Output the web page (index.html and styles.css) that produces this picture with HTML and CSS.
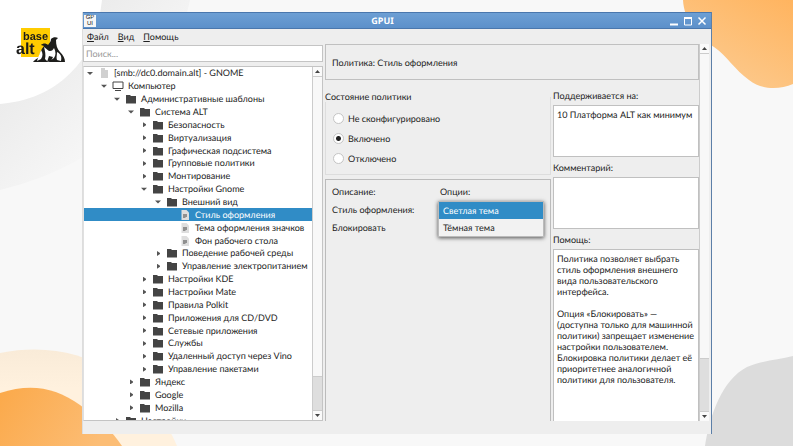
FILE: index.html
```html
<!DOCTYPE html>
<html lang="ru">
<head>
<meta charset="utf-8">
<title>GPUI</title>
<link rel="stylesheet" href="styles.css">
</head>
<body>
<svg class="backdrop" viewBox="0 0 793 446" preserveAspectRatio="none" aria-hidden="true">
  <defs>
    <linearGradient id="g-shade" x1="0" y1="0" x2="1" y2="1"><stop offset="0" stop-color="#e4e4e4"/><stop offset="0.7" stop-color="#f8f8f8"/></linearGradient>
    <linearGradient id="g-top" x1="1" y1="0" x2="0.3" y2="1"><stop offset="0" stop-color="#ffb45f"/><stop offset="1" stop-color="#fccb90"/></linearGradient>
    <linearGradient id="g-low" x1="0" y1="0" x2="1" y2="0.3"><stop offset="0" stop-color="#fba94a"/><stop offset="1" stop-color="#fcbd75"/></linearGradient>
    <linearGradient id="g-cream" x1="0" y1="0" x2="0" y2="1"><stop offset="0" stop-color="#f9ebd8"/><stop offset="0.4" stop-color="#fff1de"/></linearGradient>
  </defs>
  <path fill="#f8f8f8" d="M0 0H793V446H0z"/>
  <path fill="url(#g-shade)" d="M0 0H190C170 90 120 160 0 190z"/>
  <path fill="#fff" d="M0 0H102C99 25 93 48 77 66C59 87 35 101 0 104z"/>
  <path fill="url(#g-top)" d="M683 0C684 20 697 36 714 47C727 56 735 70 749 80C762 90 779 90 793 84V0z"/>
  <path fill="url(#g-cream)" d="M0 353C45 344 82 353 112 371C142 389 165 417 177 446H0z"/>
  <path fill="url(#g-low)" d="M0 393C30 383 55 387 80 405C98 418 112 431 122 446H0z"/>
  <path fill="#dcdcdc" d="M705 446C710 415 722 380 747 367C760 361 777 360 793 356V446z"/>
</svg>

<svg class="sprite" aria-hidden="true">
  <symbol id="folder" viewBox="0 0 10 10"><path d="M0 1h4l1 1h5v7.500h-10z"/></symbol>
  <symbol id="computer" viewBox="0 0 12 10"><path fill="none" stroke="currentColor" d="M1 1h10v6.500h-10zM3 9.500h6"/></symbol>
  <symbol id="file" viewBox="0 0 10 10"><path fill="#dedede" d="M1.500 0h5l2.500 2.500v7.500h-7.500z"/><path d="M3 4h4v3h-1.500v1h-2.500z" fill="#909090"/></symbol>
  <symbol id="root" viewBox="0 0 10 10"><path fill="#d0d0d0" d="M2 0h4v2h3v8h-7z"/></symbol>
</svg>

<div class="page">
  <svg class="logo" viewBox="0 0 52 40" role="img" aria-label="Basealt">
    <path fill="#fc0" d="M6 3h29v29h-29z"/>
    <text class="logo-base" x="8" y="15">base</text>
    <text class="logo-alt" x="1" y="29">alt</text>
    <path fill="#1d1d1b" d="M36 14c2-2 5-2 7-1l-2 2c0 5 1 9 4 12c3 3 5 6 5 10h-32c1-2 4-3 6-5c1-4 2-8 5-11l-3-1c2-2 5-2 7 0c1-2 3-3 3-6z"/>
    <path fill="#fff" d="M29 22c3 2 4 4 6 4c2 0 3-1 4-3c2 4 2 7 0 10c-2 1-4 3-6 4l-3-3c1-4 0-8-1-12zM26 25c2 3 2 6 0 9l-4 2c1-4 3-8 4-11zM42 27c4 2 5 5 4 9l-4-1c-1-2 0-5 0-8z"/>
    <path fill="#1d1d1b" d="M34 31l4 1-2 4-4 1z"/>
  </svg>

  <main class="window">
    <header class="titlebar">
      <span class="app-icon">GP<br>UI</span>
      <h1>GPUI</h1>
      <div class="controls">
        <button aria-label="Свернуть"><svg viewBox="0 0 10 10"><path d="M1 8.500h8" stroke-width="2"/></svg></button>
        <button aria-label="Развернуть"><svg viewBox="0 0 10 10"><path d="M1.500 1v8h7v-8M1 2h8" /><path d="M1 2h8" stroke-width="2"/></svg></button>
        <button aria-label="Закрыть"><svg viewBox="0 0 10 10"><path d="M1.500 1.500l7 7M8.500 1.500l-7 7" stroke-width="1.500"/></svg></button>
      </div>
    </header>
    <nav class="menu">
      <a href="#"><u>Ф</u>айл</a><a href="#"><u>В</u>ид</a><a href="#"><u>П</u>омощь</a>
    </nav>

    <div class="body">
      <aside class="sidebar">
        <input class="search" type="search" placeholder="Поиск..." aria-label="Поиск">
        <div class="tree-frame">
          <div class="tree-clip">
          <ul class="tree">
            <li class="l0 open"><svg><use href="#root"/></svg>[smb://dc0.domain.alt] - GNOME</li>
            <li class="l1 open"><svg class="wide"><use href="#computer"/></svg>Компьютер</li>
            <li class="l2 open"><svg><use href="#folder"/></svg>Административные шаблоны</li>
            <li class="l3 open"><svg><use href="#folder"/></svg>Система ALT</li>
            <li class="l4 shut"><svg><use href="#folder"/></svg>Безопасность</li>
            <li class="l4 shut"><svg><use href="#folder"/></svg>Виртуализация</li>
            <li class="l4 shut"><svg><use href="#folder"/></svg>Графическая подсистема</li>
            <li class="l4 shut"><svg><use href="#folder"/></svg>Групповые политики</li>
            <li class="l4 shut"><svg><use href="#folder"/></svg>Монтирование</li>
            <li class="l4 open"><svg><use href="#folder"/></svg>Настройки Gnome</li>
            <li class="l5 open"><svg><use href="#folder"/></svg>Внешний вид</li>
            <li class="l6 current"><svg><use href="#file"/></svg>Стиль оформления</li>
            <li class="l6"><svg><use href="#file"/></svg>Тема оформления значков</li>
            <li class="l6"><svg><use href="#file"/></svg>Фон рабочего стола</li>
            <li class="l5 shut"><svg><use href="#folder"/></svg>Поведение рабочей среды</li>
            <li class="l5 shut"><svg><use href="#folder"/></svg>Управление электропитанием</li>
            <li class="l4 shut"><svg><use href="#folder"/></svg>Настройки KDE</li>
            <li class="l4 shut"><svg><use href="#folder"/></svg>Настройки Mate</li>
            <li class="l4 shut"><svg><use href="#folder"/></svg>Правила Polkit</li>
            <li class="l4 shut"><svg><use href="#folder"/></svg>Приложения для CD/DVD</li>
            <li class="l4 shut"><svg><use href="#folder"/></svg>Сетевые приложения</li>
            <li class="l4 shut"><svg><use href="#folder"/></svg>Службы</li>
            <li class="l4 shut"><svg><use href="#folder"/></svg>Удаленный доступ через Vino</li>
            <li class="l4 shut"><svg><use href="#folder"/></svg>Управление пакетами</li>
            <li class="l3 shut"><svg><use href="#folder"/></svg>Яндекс</li>
            <li class="l3 shut"><svg><use href="#folder"/></svg>Google</li>
            <li class="l3 shut"><svg><use href="#folder"/></svg>Mozilla</li>
            <li class="l2 shut"><svg><use href="#folder"/></svg>Настройки</li>
          </ul>
          </div>
          <div class="scroll"><span class="up"></span><span class="thumb"></span><span class="rest"></span><span class="down"></span></div>
        </div>
      </aside>

      <section class="policy">
        <h2>Политика: Стиль оформления</h2>
        <div class="columns">
          <div class="settings">
            <fieldset>
              <legend>Состояние политики</legend>
              <label><input type="radio" name="state">Не сконфигурировано</label>
              <label><input type="radio" name="state" checked>Включено</label>
              <label><input type="radio" name="state">Отключено</label>
            </fieldset>
            <div class="options">
              <span>Описание:</span><span class="heading">Опции:</span>
              <label for="theme">Стиль оформления:</label>
              <select id="theme" size="2"><option selected>Светлая тема</option><option>Тёмная тема</option></select>
              <span>Блокировать</span>
            </div>
          </div>
          <div class="notes">
            <label for="supported">Поддерживается на:</label>
            <textarea id="supported" class="short" readonly>10 Платформа ALT как минимум</textarea>
            <label for="comment">Комментарий:</label>
            <textarea id="comment" class="short"></textarea>
            <label for="help">Помощь:</label>
            <textarea id="help" class="help" readonly>Политика позволяет выбрать стиль оформления внешнего вида пользовательского интерфейса.

Опция «Блокировать» — (доступна только для машинной политики) запрещает изменение настройки пользователем. Блокировка политики делает её приоритетнее аналогичной политики для пользователя.</textarea>
          </div>
        </div>
      </section>
      <div class="scroll outer"><span class="up"></span><span class="thumb"></span><span class="rest"></span><span class="down"></span></div>
    </div>
  </main>
</div>
</body>
</html>
```
FILE: styles.css
```css
* { box-sizing: border-box; }
html, body { height: 100%; margin: 0; }
body, input, select, textarea, button {
  font: 9px/11px Lato, "Noto Sans", sans-serif;
  color: #222;
  text-rendering: geometricPrecision;
}
body { overflow: hidden; background: #f8f8f8; }
.backdrop { position: fixed; inset: 0; width: 100%; height: 100%; z-index: -1; }
.sprite { display: none; }
ul, h1, h2, fieldset { margin: 0; padding: 0; }

.page { display: flex; height: 100vh; padding: 12px 81px 12px 0; }
.logo { flex: none; width: 52px; height: 40px; margin: 13px 15px 0; }
.logo-base, .logo-alt { font-family: "Liberation Sans", sans-serif; font-weight: bold; fill: #1d1d1b; }
.logo-base { font-size: 11px; }
.logo-alt { font-size: 16px; }

.window {
  flex: 1;
  min-width: 0;
  display: flex;
  flex-direction: column;
  background: #eee;
  border-left: 1px solid #ddd;
  border-right: 1px solid #5c7fa8;
}
.titlebar {
  display: flex;
  align-items: center;
  height: 17px;
  padding: 0 4px 0 1px;
  background: linear-gradient(#6d9fd4, #5c90ca);
  border-top: 1px solid #4a77ad;
  border-bottom: 1px solid #4a77ad;
}
.app-icon { width: 12px; height: 12px; background: #f6f6f6; font: 6px/6px "Liberation Sans", sans-serif; text-align: center; }
h1 { flex: 1; text-align: center; font-family: "Noto Sans", sans-serif; font-size: 9px; color: #fff; }
.controls { display: flex; gap: 4px; }
.controls button { width: 10px; height: 10px; padding: 0; border: 0; background: none; }
.controls svg { display: block; width: 10px; height: 10px; fill: none; stroke: #fff; }

.menu { display: flex; gap: 9px; height: 15px; padding: 2px 4px; }
.menu a { color: #222; text-decoration: none; }

.body { flex: 1; min-height: 0; display: flex; padding: 0 2px 13px 0; }
.sidebar { flex: 0 0 240px; min-width: 0; display: flex; flex-direction: column; gap: 4px; padding-top: 1px; }
.search { height: 17px; padding: 0 2px; border: 1px solid #c4c4c4; background: #fff; outline: 0; }
.search::placeholder { color: #999; }
.tree-frame { flex: 1; min-height: 0; display: flex; background: #fff; border: 1px solid #c4c4c4; border-left-color: #e0e0e0; }
.tree-clip { flex: 1; min-width: 0; overflow: hidden; display: flex; }
.tree { flex: 1; display: grid; grid-auto-rows: 1fr; margin-bottom: -7px; list-style: none; }
.tree li { display: flex; align-items: center; min-height: 0; line-height: 12px; white-space: nowrap; }
.tree li::before { content: ""; width: 15px; height: 5px; background: #555; visibility: hidden; }
.tree .open::before { visibility: visible; clip-path: polygon(3px 1px, 9px 1px, 6px 4px); }
.tree .shut::before { visibility: visible; clip-path: polygon(5px 0, 8px 2px, 8px 3px, 5px 5px); }
.tree svg { width: 10px; height: 10px; margin-right: 5px; color: #444; fill: #444; }
.tree .wide { width: 12px; margin: 0 4px 0 -1px; }
.l1 { padding-left: 14px; }
.l2 { padding-left: 27px; }
.l3 { padding-left: 41px; }
.l4 { padding-left: 54px; }
.l5 { padding-left: 68px; }
.l6 { padding-left: 81px; }
.current { background: #308cc6; color: #fff; }

.scroll { flex: none; width: 10px; display: flex; flex-direction: column; border-left: 1px solid #ccc; background: #f8f8f8; }
.up, .down { display: grid; place-items: center; height: 10px; background: #fafafa; }
.up { border-bottom: 1px solid #ccc; }
.down { border-top: 1px solid #ccc; }
.up::before, .down::before { content: ""; width: 5px; height: 3px; background: #444; clip-path: polygon(0 0, 100% 0, 50% 100%); }
.up::before { clip-path: polygon(50% 0, 100% 100%, 0 100%); }
.thumb { flex: 301; }
.rest { flex: 33; background: #dedede; border-top: 1px solid #ccc; }
.outer .thumb { flex: 305; }
.outer .rest { flex: 52; }

.policy { flex: 1; min-width: 0; display: flex; flex-direction: column; margin-left: 2px; }
h2 { height: 36px; padding: 12px 6px; border: 1px solid #c0c0c0; font-size: 9px; font-weight: normal; }
.columns { flex: 1; min-height: 0; display: flex; gap: 2px; }
.settings { flex: 1; min-width: 0; display: flex; flex-direction: column; padding-top: 11px; gap: 4px; }
fieldset { display: flex; flex-direction: column; gap: 9px; min-width: 0; height: 84px; padding: 11px 7px 0; border: 1px solid #ddd; border-top: 0; margin: 0; }
legend { padding: 0; margin-left: -8px; }
fieldset label { display: flex; align-items: center; gap: 4px; }
input[type="radio"] { appearance: none; width: 11px; height: 11px; margin: 0; border: 1px solid #c4c4c4; border-radius: 50%; background: #fff; }
input[type="radio"]:checked { background: radial-gradient(circle, #222 2px, #fff 3px); }
.options {
  flex: 1;
  display: grid;
  grid-template-columns: 106px 1fr;
  grid-template-rows: 17px 17px 17px;
  gap: 1px 0;
  align-items: center;
  align-content: start;
  padding: 3px 6px;
  border: 1px solid #bbb;
  border-bottom: 0;
}
.heading { padding-left: 2px; }
select {
  grid-area: 2 / 2 / 4 / 3;
  height: 36px;
  padding: 0;
  border: 1px solid #bbb;
  border-radius: 0;
  background: #f2f2f2;
  box-shadow: 0 1px 4px #000a;
  overflow: hidden;
  outline: 0;
}
option { height: 17px; min-height: 17px; padding: 3px 4px; line-height: 11px; }
option:checked { background: #308cc6 linear-gradient(#308cc6, #308cc6); color: #fff; }

.notes { flex: 0 0 146px; display: flex; flex-direction: column; padding-top: 10px; }
.notes label { padding-bottom: 4px; }
textarea { display: block; width: 100%; margin: 0; border: 1px solid #c0c0c0; border-radius: 0; background: #fff; resize: none; outline: 0; overflow: hidden; padding: 3px; }
.short { flex: none; height: 52px; margin-bottom: 5px; }
.help { flex: 1; min-height: 0; border-bottom: 0; }
```
